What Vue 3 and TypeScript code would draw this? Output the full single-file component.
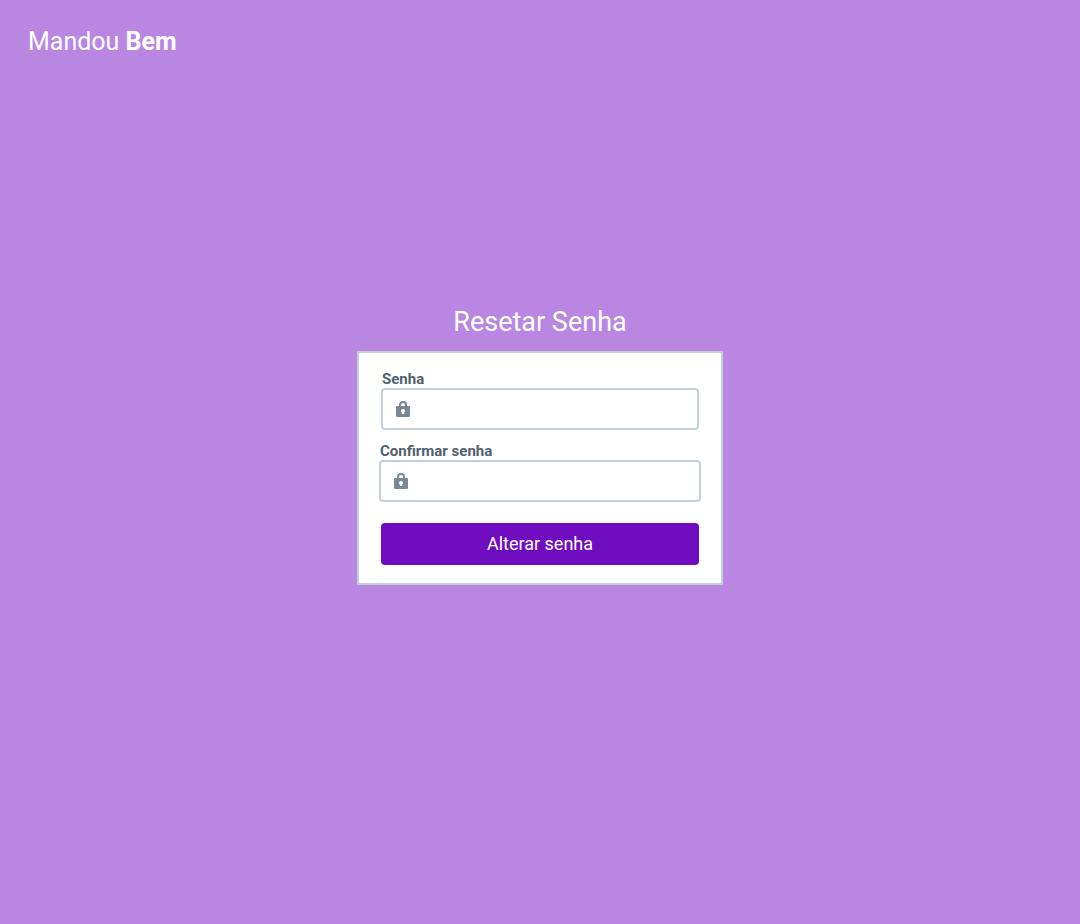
<script setup lang="ts">
import { reactive } from 'vue'

interface Field {
  id: 'password' | 'confirmation'
  label: string
}

const fields: Field[] = [
  { id: 'password', label: 'Senha' },
  { id: 'confirmation', label: 'Confirmar senha' },
]

const form = reactive({ password: '', confirmation: '' })
</script>

<template>
  <div class="page">
    <header class="header">
      <span class="brand">Mandou <strong>Bem</strong></span>
    </header>
    <main class="main">
      <h1 class="title">Resetar Senha</h1>
      <form class="card" @submit.prevent>
        <div v-for="field in fields" :key="field.id" class="field" :class="field.id">
          <label class="label" :for="field.id">{{ field.label }}</label>
          <div class="box">
            <svg class="lock" viewBox="0 0 14 16" aria-hidden="true">
              <path
                fill-rule="evenodd"
                d="M3 5V4a4 4 0 0 1 8 0v1h2a1 1 0 0 1 1 1v9a1 1 0 0 1-1 1H1a1 1 0 0 1-1-1V6a1 1 0 0 1 1-1ZM5 5h4V4a2 2 0 0 0-4 0ZM7 8a2 2 0 0 0-1.200 3.600V13h2.400v-1.400A2 2 0 0 0 7 8Z"
              />
            </svg>
            <input :id="field.id" v-model="form[field.id]" class="input" type="password" />
          </div>
        </div>
        <button class="submit" type="submit">Alterar senha</button>
      </form>
    </main>
  </div>
</template>

<style>
body {
  margin: 0;
  background: #b986e2;
}
</style>

<style scoped>
.page {
  display: flex;
  flex-direction: column;
  box-sizing: border-box;
  min-height: 100vh;
  padding-bottom: 120px;
  background: #b986e2;
  color: #fff;
  font-family: Roboto, "Liberation Sans", sans-serif;
}

.header {
  display: flex;
  align-items: center;
  height: 84px;
  padding: 0 28px;
}

.brand {
  font-size: 25px;
  line-height: 36px;
}

.brand strong {
  font-weight: 700;
}

.main {
  display: flex;
  flex: 1;
  flex-direction: column;
  align-items: center;
  justify-content: center;
}

.title {
  margin: 0 0 11px;
  font-size: 27px;
  font-weight: 400;
  line-height: 36px;
}

.card {
  display: flex;
  flex-direction: column;
  gap: 12px;
  box-sizing: border-box;
  width: 100%;
  max-width: 366px;
  padding: 17px 20px 18px;
  border: 2px solid #c3cfd9;
  background: #fff;
}

.field {
  display: flex;
  flex-direction: column;
}

.password {
  margin: 0 2px;
}

.label {
  padding-left: 1px;
  color: #4f6070;
  font-size: 15px;
  font-weight: 700;
  line-height: 18px;
}

.box {
  display: flex;
  align-items: center;
  gap: 12px;
  box-sizing: border-box;
  height: 42px;
  padding: 0 13px;
  border: 2px solid #c3cfd9;
  border-radius: 4px;
}

.box:focus-within {
  border-color: #710dc1;
}

.lock {
  flex: none;
  width: 14px;
  height: 16px;
  fill: #788896;
}

.input {
  flex: 1;
  min-width: 0;
  padding: 0;
  border: 0;
  outline: 0;
  background: transparent;
  color: #4f6070;
  font: inherit;
  font-size: 16px;
}

.submit {
  height: 42px;
  margin: 9px 2px 0;
  border: 0;
  border-radius: 4px;
  background: #710dc1;
  color: #fff;
  font-family: inherit;
  font-size: 18px;
  cursor: pointer;
}
</style>
